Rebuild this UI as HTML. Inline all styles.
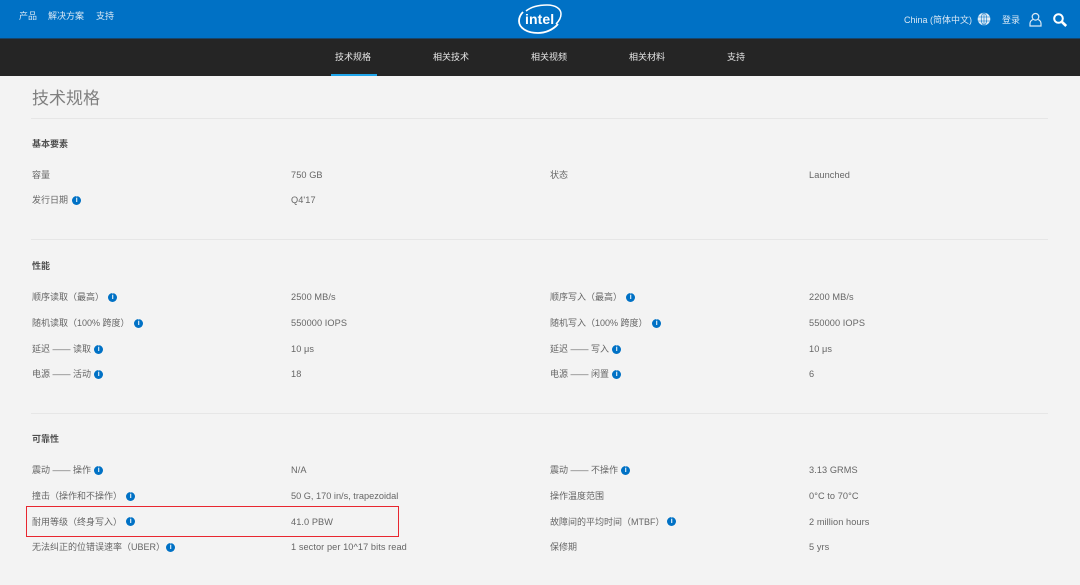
<!DOCTYPE html>
<html lang="zh-CN">
<head>
<meta charset="utf-8">
<title>技术规格</title>
<style>
html,body{margin:0;padding:0;width:1080px;height:585px;overflow:hidden;background:#f3f3f3}
#p{position:relative;width:1080px;height:585px;overflow:hidden;filter:blur(.35px);font-family:"Liberation Sans","Noto Sans CJK SC",sans-serif;font-size:9px;color:#666}
.b{position:absolute;left:0;width:1080px}
.t{position:absolute;line-height:14px;white-space:nowrap;height:14px}
.h{font-weight:bold;color:#4f4f4f}
.n{color:#e6e6e6}
.w{color:#dbe9f5}
.v{letter-spacing:.08px;font-size:9.2px}
.l{position:absolute;left:31px;width:1017px;height:1px;background:#e6e6e6}
.i{position:absolute;width:9px;height:9px;margin:-.5px 0 0 -.8px;border-radius:50%;background:#0071c5;color:#fff;font:bold 7px/9px "Liberation Sans",sans-serif;text-align:center}
svg{position:absolute}
</style>
</head>
<body>
<div id="p">
<div class="b" style="top:0;height:38px;background:#0071c5"></div>
<div class="b" style="top:38px;height:1px;background:#17456b"></div>
<div class="b" style="top:39px;height:37px;background:#252525"></div>
<div style="position:absolute;left:331px;top:74px;width:46px;height:2px;background:#1fa5ea"></div>

<div class="t w" style="left:19px;top:9px">产品</div>
<div class="t w" style="left:48px;top:9px">解决方案</div>
<div class="t w" style="left:96px;top:9px">支持</div>

<svg style="left:518px;top:4px" width="44" height="30" viewBox="0 0 44 30">
<path d="M8 7C13 3 21 1 29 1C38 1 43 5 43 10C43 14 41 17 38 20" fill="none" stroke="#fff" stroke-width="1.500"/>
<path d="M5 8C2 11 1 14 1 17C1 24 9 29 20 29C27 29 35 26 40 20" fill="none" stroke="#fff" stroke-width="1.800"/>
<text x="7" y="20" font-family="Liberation Sans,sans-serif" font-size="14" font-weight="bold" fill="#fff" letter-spacing=".1">intel</text>
</svg>

<div class="t w" style="left:904px;top:13px;font-size:9px">China (简体中文)</div>
<svg style="left:977px;top:12px" width="14" height="14" viewBox="0 0 14 14">
<circle cx="7" cy="7" r="6.300" fill="#e3eef7"/>
<g fill="none" stroke="#0071c5" stroke-width=".6"><ellipse cx="7" cy="7" rx="2.800" ry="6"/><path d="M1 5h12M1 9h12M7 1v12"/></g>
</svg>
<div class="t w" style="left:1002px;top:13px">登录</div>
<svg style="left:1028px;top:12px" width="15" height="15" viewBox="0 0 15 15" fill="none" stroke="#dbe9f5" stroke-width="1.200">
<circle cx="7.500" cy="4.800" r="3.300"/><path d="M4.800 7.500C3 8.500 2 9.500 2 11.500V14H13V11.500C13 9.500 12 8.500 10.200 7.500"/>
</svg>
<svg style="left:1052px;top:12px" width="16" height="16" viewBox="0 0 16 16" fill="none" stroke="#fff">
<circle cx="6.500" cy="6.500" r="4.300" stroke-width="2"/><path d="M10 10l4.200 4" stroke-width="2.600"/>
</svg>

<div class="t n" style="left:335px;top:50px">技术规格</div>
<div class="t n" style="left:433px;top:50px">相关技术</div>
<div class="t n" style="left:531px;top:50px">相关视频</div>
<div class="t n" style="left:629px;top:50px">相关材料</div>
<div class="t n" style="left:727px;top:50px">支持</div>

<div class="t" style="left:32px;top:89px;font-size:17px;line-height:20px;height:20px;color:#808080">技术规格</div>
<div class="l" style="top:118px"></div>
<div class="l" style="top:239px"></div>
<div class="l" style="top:413px"></div>

<div class="t h" style="left:32px;top:137px">基本要素</div>
<div class="t" style="left:32px;top:168px">容量</div>
<div class="t v" style="left:291px;top:168px">750 GB</div>
<div class="t" style="left:550px;top:168px">状态</div>
<div class="t v" style="left:809px;top:168px">Launched</div>
<div class="t" style="left:32px;top:193px">发行日期</div><span class="i" style="left:73px;top:196px">i</span>
<div class="t v" style="left:291px;top:193px">Q4'17</div>

<div class="t h" style="left:32px;top:259px">性能</div>
<div class="t" style="left:32px;top:290px">顺序读取（最高）</div><span class="i" style="left:109px;top:293px">i</span>
<div class="t v" style="left:291px;top:290px">2500 MB/s</div>
<div class="t" style="left:550px;top:290px">顺序写入（最高）</div><span class="i" style="left:627px;top:293px">i</span>
<div class="t v" style="left:809px;top:290px">2200 MB/s</div>
<div class="t" style="left:32px;top:316px">随机读取（100% 跨度）</div><span class="i" style="left:135px;top:319px">i</span>
<div class="t v" style="left:291px;top:316px">550000 IOPS</div>
<div class="t" style="left:550px;top:316px">随机写入（100% 跨度）</div><span class="i" style="left:653px;top:319px">i</span>
<div class="t v" style="left:809px;top:316px">550000 IOPS</div>
<div class="t" style="left:32px;top:342px">延迟 —— 读取</div><span class="i" style="left:95px;top:345px">i</span>
<div class="t v" style="left:291px;top:342px">10 μs</div>
<div class="t" style="left:550px;top:342px">延迟 —— 写入</div><span class="i" style="left:613px;top:345px">i</span>
<div class="t v" style="left:809px;top:342px">10 μs</div>
<div class="t" style="left:32px;top:367px">电源 —— 活动</div><span class="i" style="left:95px;top:370px">i</span>
<div class="t v" style="left:291px;top:367px">18</div>
<div class="t" style="left:550px;top:367px">电源 —— 闲置</div><span class="i" style="left:613px;top:370px">i</span>
<div class="t v" style="left:809px;top:367px">6</div>

<div class="t h" style="left:32px;top:432px">可靠性</div>
<div class="t" style="left:32px;top:463px">震动 —— 操作</div><span class="i" style="left:95px;top:466px">i</span>
<div class="t v" style="left:291px;top:463px">N/A</div>
<div class="t" style="left:550px;top:463px">震动 —— 不操作</div><span class="i" style="left:622px;top:466px">i</span>
<div class="t v" style="left:809px;top:463px">3.13 GRMS</div>
<div class="t" style="left:32px;top:489px">撞击（操作和不操作）</div><span class="i" style="left:127px;top:492px">i</span>
<div class="t v" style="left:291px;top:489px;letter-spacing:0">50 G, 170 in/s, trapezoidal</div>
<div class="t" style="left:550px;top:489px">操作温度范围</div>
<div class="t v" style="left:809px;top:489px">0°C to 70°C</div>
<div class="t" style="left:32px;top:515px">耐用等级（终身写入）</div><span class="i" style="left:127px;top:517px">i</span>
<div class="t v" style="left:291px;top:515px">41.0 PBW</div>
<div class="t" style="left:550px;top:515px">故障间的平均时间（MTBF）</div><span class="i" style="left:668px;top:517px">i</span>
<div class="t v" style="left:809px;top:515px">2 million hours</div>
<div class="t" style="left:32px;top:540px">无法纠正的位错误速率（UBER）</div><span class="i" style="left:167px;top:543px">i</span>
<div class="t v" style="left:291px;top:540px">1 sector per 10^17 bits read</div>
<div class="t" style="left:550px;top:540px">保修期</div>
<div class="t v" style="left:809px;top:540px">5 yrs</div>

<div style="position:absolute;left:26px;top:506px;width:371px;height:29px;border:1.500px solid #e8262f"></div>
</div>
</body>
</html>
